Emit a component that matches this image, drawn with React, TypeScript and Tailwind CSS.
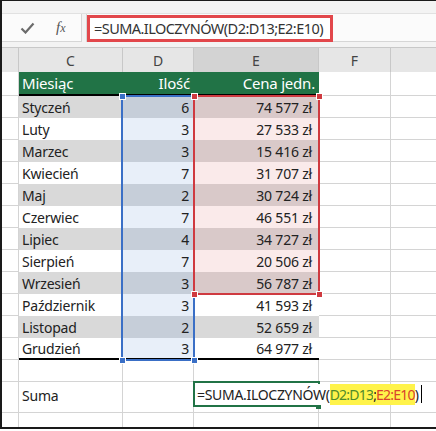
import React from 'react';

const rows: [string, string, string][] = [
  ['Styczeń', '6', '74 577 zł'],
  ['Luty', '3', '27 533 zł'],
  ['Marzec', '3', '15 416 zł'],
  ['Kwiecień', '7', '31 707 zł'],
  ['Maj', '2', '30 724 zł'],
  ['Czerwiec', '7', '46 551 zł'],
  ['Lipiec', '4', '34 727 zł'],
  ['Sierpień', '7', '20 506 zł'],
  ['Wrzesień', '3', '56 787 zł'],
  ['Październik', '3', '41 593 zł'],
  ['Listopad', '2', '52 659 zł'],
  ['Grudzień', '3', '64 977 zł'],
];

const font = { fontFamily: '"Segoe UI", "Noto Sans", "Open Sans", sans-serif' };

function Handle({ x, y, color }: { x: number; y: number; color: string }) {
  return (
    <div
      className="absolute w-[7px] h-[7px] border border-white"
      style={{ left: x - 3.5, top: y - 3.5, background: color }}
    />
  );
}

export default function App() {
  return (
    <div className="w-[436px] h-[431px] bg-white overflow-hidden relative text-[#222]" style={font}>
      <div className="border-l-2 border-t border-b-2 border-[#1a1a1a] h-[429px] w-[436px] flex flex-col">
        {/* top strip */}
        <div className="h-[13px] bg-[#f3f3f3] border-b border-[#e1e1e1]" />
        {/* formula bar */}
        <div className="h-[28px] bg-[#f3f3f3] flex items-stretch">
          <div className="w-[80px] bg-[#fbfbfb] border-r border-b border-[#d6d6d6] flex items-center">
            <svg className="ml-[18px]" width="15" height="12" viewBox="0 0 15 12">
              <path d="M1.5 6.5 L5.5 10.5 L13.5 1.5" fill="none" stroke="#6b6b6b" strokeWidth="2.2" />
            </svg>
            <span
              className="ml-[21px] text-[#555] text-[15px] italic leading-none"
              style={{ fontFamily: '"Liberation Serif", serif' }}
            >
              f<span className="text-[12px]">x</span>
            </span>
          </div>
          <div className="ml-[4px] flex-1 bg-[#fbfbfb] border-b border-l border-[#d6d6d6] flex items-stretch">
            <div className="mt-[1px] h-[27px] w-[246px] bg-white border-[3px] border-[#e2474b] flex items-center pl-[4px] text-[14.5px] text-[#333] whitespace-nowrap tracking-[-0.55px]">
              =SUMA.ILOCZYNÓW(D2:D13;E2:E10)
            </div>
          </div>
        </div>
        <div className="h-[5px] bg-[#f3f3f3]" />
        {/* column headers */}
        <div className="h-[25px] flex bg-[#e6e6e6] border-t border-[#c8c8c8] text-[14px] text-[#444]">
          <div className="w-[17px] border-r border-[#c8c8c8]" />
          <div className="w-[104px] border-r border-[#c8c8c8] flex items-center justify-center">C</div>
          <div className="w-[71px] border-r border-[#c8c8c8] flex items-center justify-center">D</div>
          <div className="w-[125px] border-r border-[#c8c8c8] bg-[#d3d3d3] flex items-center justify-center">E</div>
          <div className="w-[72px] border-r border-[#c8c8c8] flex items-center justify-center">F</div>
          <div className="flex-1" />
        </div>
        {/* grid */}
        <div className="relative flex flex-col text-[14px] tracking-[-0.2px]">
          {/* table header */}
          <div className="h-[24px] flex">
            <div className="w-[17px] border-r border-b border-[#d4d4d4]" />
            <div className="w-[300px] flex bg-[#217346] text-white text-[15px] border-b-2 border-black">
              <div className="w-[104px] pl-[3px] flex items-center">Miesiąc</div>
              <div className="w-[71px] pr-[4px] flex items-center justify-end">Ilość</div>
              <div className="w-[125px] pr-[4px] flex items-center justify-end">Cena jedn.</div>
            </div>
            <div className="w-[72px] border-r border-b border-[#d4d4d4]" />
            <div className="flex-1 border-b border-[#d4d4d4]" />
          </div>
          {rows.map((r, i) => {
            const band = i % 2 === 0;
            const inRed = i < 9;
            const last = i === rows.length - 1;
            return (
              <div key={i} className="h-[22px] flex">
                <div className="w-[17px] border-r border-b border-[#d4d4d4]" />
                <div className={`w-[300px] flex ${last ? 'border-b-2 border-black' : ''}`}>
                  <div className={`w-[104px] pl-[3px] flex items-center ${band ? 'bg-[#d9d9d9]' : 'bg-white'}`}>{r[0]}</div>
                  <div className={`w-[71px] pr-[5px] flex items-center justify-end ${band ? 'bg-[#c6ced9]' : 'bg-[#e8eff9]'}`}>{r[1]}</div>
                  <div
                    className={`w-[125px] pr-[7px] flex items-center justify-end ${
                      inRed ? (band ? 'bg-[#d9c9c9]' : 'bg-[#faeaea]') : band ? 'bg-[#d9d9d9]' : 'bg-white'
                    }`}
                  >
                    {r[2]}
                  </div>
                </div>
                <div className="w-[72px] border-r border-b border-[#d4d4d4]" />
                <div className="flex-1 border-b border-[#d4d4d4]" />
              </div>
            );
          })}
          {/* empty row */}
          <div className="h-[22px] flex">
            <div className="w-[17px] border-r border-b border-[#d4d4d4]" />
            <div className="w-[104px] border-r border-b border-[#d4d4d4]" />
            <div className="w-[71px] border-r border-b border-[#d4d4d4]" />
            <div className="w-[125px] border-r border-b border-[#d4d4d4]" />
            <div className="w-[72px] border-r border-b border-[#d4d4d4]" />
            <div className="flex-1 border-b border-[#d4d4d4]" />
          </div>
          {/* suma row */}
          <div className="h-[31px] flex">
            <div className="w-[17px] border-r border-b border-[#d4d4d4]" />
            <div className="w-[104px] border-r border-b border-[#d4d4d4] pl-[3px] pt-[3px]">Suma</div>
            <div className="w-[71px] border-r border-b border-[#d4d4d4]" />
            <div className="w-[125px] border-r border-b border-[#d4d4d4]" />
            <div className="w-[72px] border-r border-b border-[#d4d4d4]" />
            <div className="flex-1 border-b border-[#d4d4d4]" />
          </div>
          {/* last row */}
          <div className="h-[14px] flex">
            <div className="w-[17px] border-r border-[#d4d4d4]" />
            <div className="w-[104px] border-r border-[#d4d4d4]" />
            <div className="w-[71px] border-r border-[#d4d4d4]" />
            <div className="w-[125px] border-r border-[#d4d4d4]" />
            <div className="w-[72px] border-r border-[#d4d4d4]" />
            <div className="flex-1" />
          </div>

          {/* blue selection D2:D13 */}
          <div className="absolute left-[119px] top-[23px] w-[74px] h-[266px] border-2 border-[#3a6fc6]" />
          {/* red selection E2:E10 */}
          <div className="absolute left-[191px] top-[23px] w-[127px] h-[200px] border-2 border-[#cf3a40]" />
          <Handle x={120} y={24} color="#3a6fc6" />
          <Handle x={120} y={288} color="#3a6fc6" />
          <Handle x={192} y={288} color="#3a6fc6" />
          <Handle x={192} y={24} color="#cf3a40" />
          <Handle x={317} y={24} color="#cf3a40" />
          <Handle x={192} y={222} color="#cf3a40" />
          <Handle x={317} y={222} color="#cf3a40" />

          {/* editing cell */}
          <div className="absolute left-[191px] top-[309px] w-[127px] h-[26px] border-2 border-[#217346]" />
          <div className="absolute left-[314px] top-[332px] w-[5px] h-[5px] bg-[#217346]" />
          <div className="absolute left-[195px] top-[311px] h-[22px] flex items-center whitespace-nowrap text-[14px] text-[#222] tracking-[-0.3px]">
            <span className="bg-white">=SUMA.ILOCZYNÓW(</span>
            <span className="bg-[#fff34a] text-[#4f8a2a] tracking-[-0.8px]">D2:D13</span>
            <span className="bg-[#fff34a] text-[#222] tracking-[-0.8px]">;</span>
            <span className="bg-[#fff34a] text-[#d8432c] tracking-[-0.8px]">E2:E10</span>
            <span>)</span>
            <span className="ml-[2px] w-[1px] h-[18px] bg-black" />
          </div>
        </div>
      </div>
    </div>
  );
}
